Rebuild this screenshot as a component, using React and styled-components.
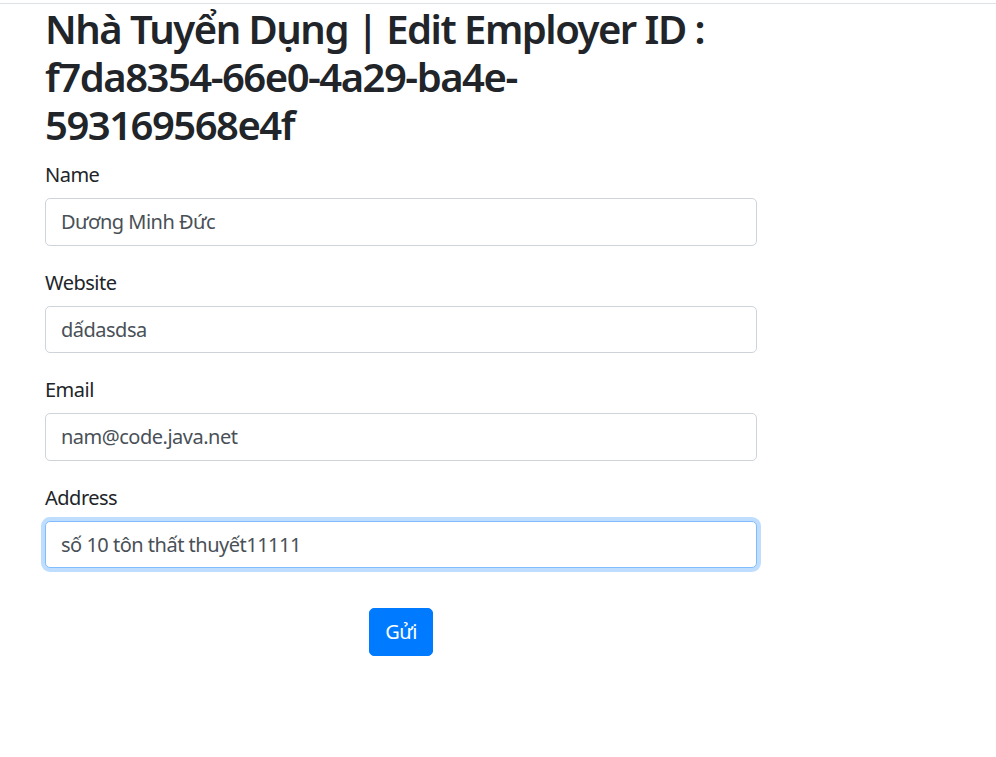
import React from "react";
import styled, { createGlobalStyle } from "styled-components";

const GlobalStyle = createGlobalStyle`
  body {
    margin: 0;
    background: #fff;
    color: #212529;
    font-family: "Noto Sans", "Open Sans", sans-serif;
  }
`;

const TopBar = styled.div`
  height: 3px;
  border-bottom: 1px solid #dee2e6;
`;

const Page = styled.div`
  width: 712px;
  padding-left: 45px;
`;

const Title = styled.h2`
  margin: 1px 0 10px;
  font-size: 40px;
  line-height: 48px;
  font-weight: 600;
  letter-spacing: -1.5px;
  color: #212529;
`;

const Form = styled.form`
  display: flex;
  flex-direction: column;
`;

const Group = styled.div`
  margin-bottom: 21px;
`;

const Label = styled.label`
  display: block;
  font-size: 20px;
  line-height: 30px;
  letter-spacing: -0.5px;
  margin-bottom: 8px;
  padding-top: 1px;
`;

const Input = styled.input`
  display: block;
  box-sizing: border-box;
  width: 100%;
  height: 47.5px;
  padding: 7.5px 15px;
  font-family: inherit;
  font-size: 20px;
  line-height: 30px;
  letter-spacing: -0.5px;
  color: #495057;
  background: #fff;
  border: 1px solid ${(p) => (p.$focused ? "#80bdff" : "#ced4da")};
  border-radius: 5px;
  outline: none;
  box-shadow: ${(p) =>
    p.$focused ? "0 0 0 4px rgba(0, 123, 255, 0.25)" : "none"};
`;

const Actions = styled.div`
  display: flex;
  justify-content: center;
  margin-top: 19px;
`;

const Button = styled.button`
  height: 48px;
  padding: 7.5px 15px;
  font-family: inherit;
  font-size: 20px;
  line-height: 30px;
  letter-spacing: -0.5px;
  color: #fff;
  background: #007bff;
  border: 1px solid #007bff;
  border-radius: 5px;
  cursor: pointer;
`;

const fields = [
  { label: "Name", value: "Dương Minh Đức" },
  { label: "Website", value: "dấdasdsa" },
  { label: "Email", value: "nam@code.java.net" },
  { label: "Address", value: "số 10 tôn thất thuyết11111", focused: true },
];

export default function App() {
  return (
    <>
      <GlobalStyle />
      <TopBar />
      <Page>
        <Title>
          Nhà Tuyển Dụng | Edit Employer ID : f7da8354-66e0-4a29-ba4e-593169568e4f
        </Title>
        <Form onSubmit={(e) => e.preventDefault()}>
          {fields.map((f) => (
            <Group key={f.label}>
              <Label>{f.label}</Label>
              <Input defaultValue={f.value} $focused={f.focused} />
            </Group>
          ))}
          <Actions>
            <Button type="submit">Gửi</Button>
          </Actions>
        </Form>
      </Page>
    </>
  );
}
